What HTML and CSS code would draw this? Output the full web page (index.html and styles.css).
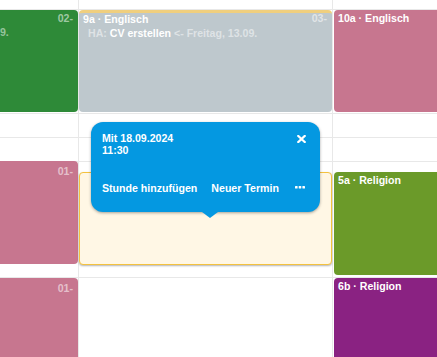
FILE: index.html
```html
<!DOCTYPE html>
<html lang="de">
<head>
<meta charset="utf-8">
<title>Stundenplan</title>
<link rel="stylesheet" href="styles.css">
</head>
<body>
<div class="board">
  <div class="lines">
    <div class="cell"></div><div class="cell"></div><div class="cell"></div>
    <div class="cell"></div><div class="cell"></div><div class="cell"></div>
    <div class="cell"></div><div class="cell"></div><div class="cell"></div>
    <div class="cell"></div><div class="cell"></div><div class="cell"></div>
    <div class="cell"></div><div class="cell"></div><div class="cell"></div>
    <div class="cell last"></div><div class="cell last"></div><div class="cell last"></div>
  </div>

  <div class="cols">
    <div class="layer c1">
      <div class="ev green" style="top:10px;height:102px">
        <div class="title">8b · Englisch</div>
        <div class="hw"><span class="dim">HA:</span> Vokabeln Teil <span class="dim">&lt;- Freitag, 13.09.</span></div>
        <span class="room">02-</span>
      </div>
      <div class="ev pink" style="top:161px;height:103px">
        <div class="title">10a · Englisch</div>
        <span class="room r2">01-</span>
      </div>
      <div class="ev pink" style="top:278px;height:100px">
        <div class="title">10a · Englisch</div>
        <span class="room r2">01-</span>
      </div>
    </div>

    <div class="layer c2">
      <div class="ev grey" style="top:10px;height:102px">
        <div class="title">9a · Englisch</div>
        <div class="hw"><span class="dim">HA:</span> CV erstellen <span class="dim">&lt;- Freitag, 13.09.</span></div>
        <span class="room">03-</span>
      </div>
      <div class="ev draft" style="top:172px;height:93px"></div>

      <div class="popup">
        <div class="popup-head">
          <div class="when">Mit 18.09.2024<br>11:30</div>
          <svg class="close" width="9" height="8" viewBox="0 0 9 8"><path d="M1.3 1 L7.7 7 M7.7 1 L1.3 7" stroke="#fff" stroke-width="2.3" stroke-linecap="square"/></svg>
        </div>
        <div class="actions">
          <span class="act">Stunde hinzufügen</span>
          <span class="act">Neuer Termin</span>
          <svg class="more" width="10" height="3" viewBox="0 0 10 3"><rect x="0" y="0" width="2.6" height="2.6" rx="0.6" fill="#fff"/><rect x="3.7" y="0" width="2.6" height="2.6" rx="0.6" fill="#fff"/><rect x="7.4" y="0" width="2.6" height="2.6" rx="0.6" fill="#fff"/></svg>
        </div>
      </div>
    </div>

    <div class="layer c3">
      <div class="ev pink" style="top:10px;height:102px">
        <div class="title">10a · Englisch</div>
      </div>
      <div class="ev olive" style="top:172px;height:103px">
        <div class="title">5a · Religion</div>
      </div>
      <div class="ev purple" style="top:278px;height:100px">
        <div class="title">6b · Religion</div>
      </div>
    </div>
  </div>
</div>
</body>
</html>
```
FILE: styles.css
```css
html, body {
  margin: 0;
  padding: 0;
  background: #fff;
  overflow: hidden;
}
body {
  width: 437px;
  height: 357px;
  font-family: "Liberation Sans", Arial, sans-serif;
  font-size: 10.6px;
  font-weight: bold;
  color: #fff;
}
.board {
  margin-left: -176px;
  width: 763px;
  height: 357px;
  display: grid;
}
.lines, .cols {
  grid-area: 1 / 1;
  display: grid;
  grid-template-columns: 255px 254px 254px;
}
.lines {
  grid-template-rows: 10px 104px 24px 24px 116px 1fr;
}
.cell {
  box-sizing: border-box;
  border-right: 1px solid #e8e8e8;
  border-bottom: 1px solid #e8e8e8;
}
.cell.last { border-bottom: 0; }
.layer {
  position: relative;
  overflow: hidden;
}
.c2 { overflow: visible; z-index: 2; }

.ev {
  position: absolute;
  border-radius: 4px;
  box-sizing: border-box;
  overflow: hidden;
}
.c1 .ev { left: 1px; right: 1px; }
.c2 .ev { left: 0; right: 1px; }
.c3 .ev { left: 1px; right: -20px; }

.title {
  padding: 2px 4px 0;
  line-height: 13px;
  white-space: nowrap;
}
.hw {
  padding: 1px 0 0 9px;
  line-height: 13px;
  white-space: nowrap;
}
.dim { color: rgba(255, 255, 255, 0.5); }
.room {
  position: absolute;
  top: 2px;
  right: 5px;
  line-height: 13px;
  color: rgba(255, 255, 255, 0.55);
}
.room.r2 { top: 4px; }

.green { background: #2e8a38; }
.grey { background: #bec8cd; border-top: 3px solid #f0cf7e; }
.grey .title { padding-top: 0; }
.grey .room { top: -1px; }
.pink { background: #c7768f; }
.olive { background: #6b9a29; }
.purple { background: #8a2282; }
.draft {
  background: #fff7e5;
  border: 1px solid #f4c23f;
  box-shadow: 0 1px 2px rgba(0, 0, 0, 0.3);
}

.popup {
  position: absolute;
  left: 12px;
  top: 122px;
  width: 229px;
  height: 90px;
  box-sizing: border-box;
  padding: 10px 13px 0 11px;
  background: #0498e1;
  border-radius: 12px;
  box-shadow: 0 1px 3px rgba(0, 0, 0, 0.35);
  display: flex;
  flex-direction: column;
  gap: 26px;
}
.popup::after {
  content: "";
  position: absolute;
  left: 111px;
  bottom: -6px;
  border-left: 8px solid transparent;
  border-right: 8px solid transparent;
  border-top: 6px solid #0498e1;
}
.popup-head {
  display: flex;
  justify-content: space-between;
  align-items: flex-start;
}
.when { line-height: 12px; }
.close { margin-top: 3px; margin-right: 1px; }
.actions {
  display: flex;
  align-items: center;
  line-height: 13px;
}
.act { margin-right: 14px; }
.act + .act { margin-right: 16px; }
.more { margin-top: -2px; }
```
